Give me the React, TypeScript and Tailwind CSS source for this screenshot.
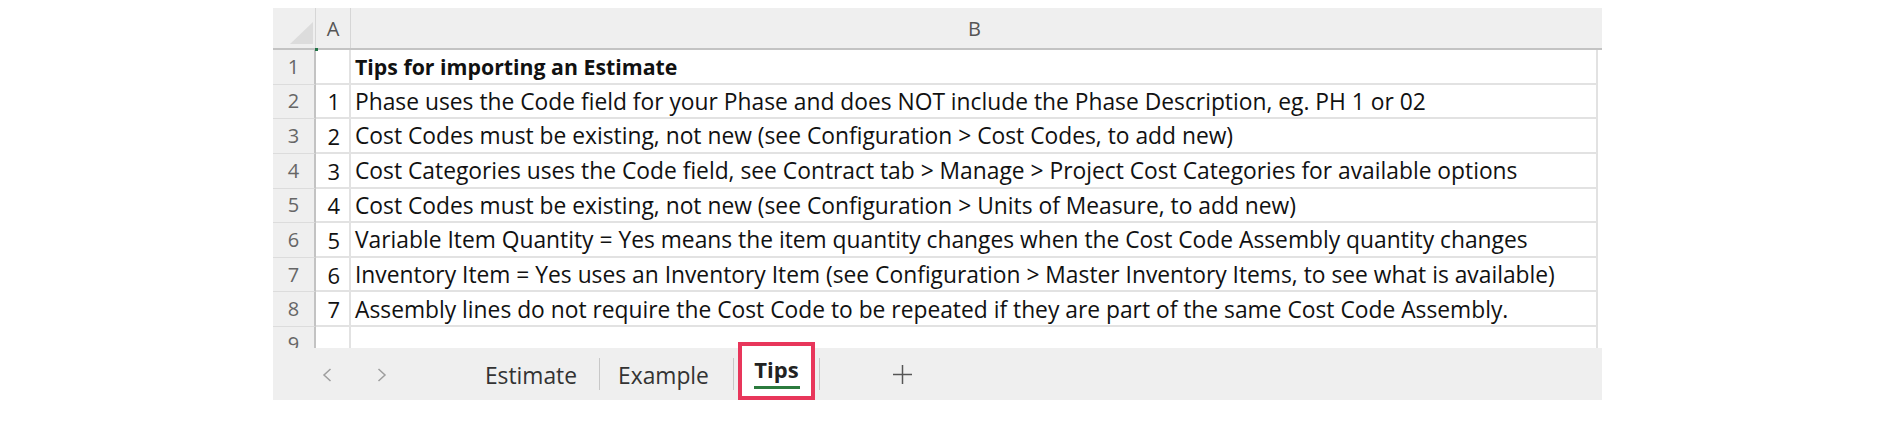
import React from "react";

const rows: [string, string][] = [
  ["", "Tips for importing an Estimate"],
  ["1", "Phase uses the Code field for your Phase and does NOT include the Phase Description, eg. PH 1 or 02"],
  ["2", "Cost Codes must be existing, not new (see Configuration > Cost Codes, to add new)"],
  ["3", "Cost Categories uses the Code field, see Contract tab > Manage > Project Cost Categories for available options"],
  ["4", "Cost Codes must be existing, not new (see Configuration > Units of Measure, to add new)"],
  ["5", "Variable Item Quantity = Yes means the item quantity changes when the Cost Code Assembly quantity changes"],
  ["6", "Inventory Item = Yes uses an Inventory Item (see Configuration > Master Inventory Items, to see what is available)"],
  ["7", "Assembly lines do not require the Cost Code to be repeated if they are part of the same Cost Code Assembly."],
];

const cellFont = { fontFamily: '"Open Sans", "Noto Sans", sans-serif' };

function Row({ n, a, b, bold }: { n: string; a: string; b: string; bold?: boolean }) {
  return (
    <div className="flex h-[34.625px]">
      <div className="w-[43px] shrink-0 bg-[#efefef] border-r-2 border-b border-r-[#c3c3c3] border-b-[#dcdcdc] flex items-center justify-center text-[20px] text-[#666]">
        {n}
      </div>
      <div className="w-[35px] shrink-0 border-r-2 border-b-2 border-[#e2e2e2] flex items-center justify-end pr-[9px] pt-[2px] text-[22px] text-[#111]">
        {a}
      </div>
      <div
        className={`w-[1247px] shrink-0 border-r-2 border-b-2 border-[#e2e2e2] flex items-center pl-[4px] pt-[2px] text-[#111] whitespace-nowrap ${bold ? "font-bold text-[21.3px]" : "text-[22.8px]"}`}
      >
        {b}
      </div>
    </div>
  );
}

export default function App() {
  return (
    <div className="w-[1900px] h-[434px] bg-white pt-[8px] pl-[273px]" style={cellFont}>
      <div className="w-[1329px] relative">
        {/* Column header */}
        <div className="flex h-[42px] bg-[#efefef] border-b-2 border-[#c3c3c3]">
          <div className="w-[43px] shrink-0 relative border-r border-[#d6d6d6]">
            <svg className="absolute left-[17px] top-[14px]" width="23" height="22" viewBox="0 0 23 22">
              <polygon points="23,0 23,22 0,22" fill="#dcdcdc" />
            </svg>
          </div>
          <div className="w-[35px] shrink-0 border-r border-[#d6d6d6] flex items-center justify-center text-[20px] text-[#555] pt-[2px]">
            A
          </div>
          <div className="w-[1247px] shrink-0 flex items-center justify-center text-[20px] text-[#555] pt-[2px]">
            B
          </div>
        </div>
        {/* Rows */}
        <div className="relative">
          <div className="absolute left-[42px] top-[-2px] w-[3px] h-[3px] bg-[#217346]" />
          {rows.map((r, i) => (
            <Row key={i} n={String(i + 1)} a={r[0]} b={r[1]} bold={i === 0} />
          ))}
          <div className="h-[21px] overflow-hidden">
            <Row n="9" a="" b="" />
          </div>
        </div>
        {/* Tab bar */}
        <div className="relative flex items-center h-[52px] bg-[#efefef] text-[22.8px] text-[#333]">
          <div className="w-[190px] shrink-0 h-full relative">
            <svg className="absolute left-[49px] top-[20px]" width="10" height="14" viewBox="0 0 10 14">
              <polyline points="8.5,1 2,7 8.5,13" fill="none" stroke="#9e9e9e" strokeWidth="1.5" />
            </svg>
            <svg className="absolute left-[104px] top-[20px]" width="10" height="14" viewBox="0 0 10 14">
              <polyline points="1.5,1 8,7 1.5,13" fill="none" stroke="#9e9e9e" strokeWidth="1.5" />
            </svg>
          </div>
          <div className="w-[136px] shrink-0 flex justify-center pt-[4px]">Estimate</div>
          <div className="w-px h-[32px] bg-[#c8c8c8] shrink-0" />
          <div className="w-[133px] shrink-0 flex justify-center pr-[6px] pt-[4px]">Example</div>
          <div className="w-px h-[32px] bg-[#c8c8c8] shrink-0" />
          <div className="ml-[4px] w-[77px] h-full shrink-0 bg-white flex flex-col items-center justify-center">
            <div className="font-bold text-[22px] text-[#222] leading-[26px] mt-[-4px]">Tips</div>
            <div className="w-[46px] h-[3px] bg-[#2b7a3d] mt-[4px]" />
          </div>
          <div className="ml-[4px] w-px h-[32px] bg-[#c8c8c8] shrink-0" />
          <div className="ml-[73px] shrink-0">
            <svg width="19" height="19" viewBox="0 0 19 19">
              <line x1="9.5" y1="0" x2="9.5" y2="19" stroke="#555" strokeWidth="1.5" />
              <line x1="0" y1="9.5" x2="19" y2="9.5" stroke="#555" strokeWidth="1.5" />
            </svg>
          </div>
          <div className="absolute left-[465px] top-[-6px] w-[77px] h-[58px] border-4 border-[#e8365b]" />
        </div>
      </div>
    </div>
  );
}
